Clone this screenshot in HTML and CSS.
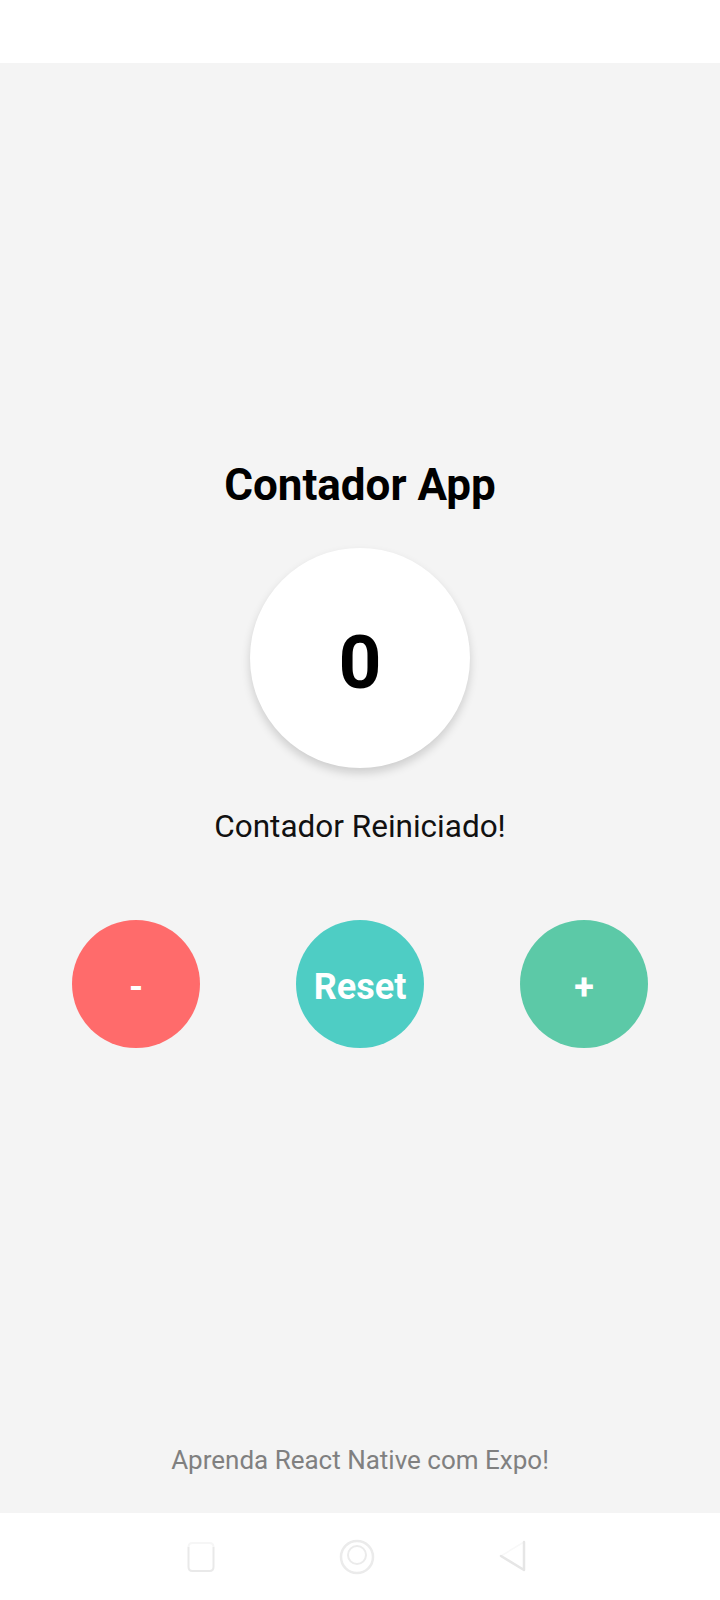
FILE: index.html
```html
<!DOCTYPE html>
<html lang="pt">
<head>
<meta charset="utf-8">
<title>Contador App</title>
<link rel="stylesheet" href="styles.css">
</head>
<body>
<div class="phone">
  <div class="status"></div>
  <main class="screen">
    <section class="content">
      <h1 class="title">Contador App</h1>
      <div class="counter"><span class="count">0</span></div>
      <p class="message">Contador Reiniciado!</p>
      <div class="buttons">
        <button class="btn btn-minus">-</button>
        <button class="btn btn-reset">Reset</button>
        <button class="btn btn-plus">+</button>
      </div>
    </section>
    <footer class="footer">Aprenda React Native com Expo!</footer>
  </main>
  <nav class="navbar">
    <svg class="nav-icon" width="28" height="32" viewBox="0 0 28 32"><path d="M1.5 6 Q1.5 2 5.5 2 H22.5 Q26.5 2 26.5 6" fill="none" stroke="#f6f6f6" stroke-width="2"/><path d="M1.5 6 V26 Q1.5 30 5.5 30 H22.5 Q26.5 30 26.5 26 V6" fill="none" stroke="#e9e9e9" stroke-width="2"/></svg>
    <svg class="nav-icon" width="36" height="36" viewBox="0 0 36 36"><circle cx="18" cy="18" r="16" fill="none" stroke="#ebebeb" stroke-width="2.5"/><circle cx="18" cy="16" r="9" fill="none" stroke="#ebebeb" stroke-width="2"/></svg>
    <svg class="nav-icon" width="28" height="34" viewBox="0 0 28 34"><path d="M25 2 L2 16" fill="none" stroke="#f8f8f8" stroke-width="1.5" stroke-linecap="round"/><path d="M25 2 V30 L2 16" fill="none" stroke="#e6e6e6" stroke-width="2.5" stroke-linejoin="round" stroke-linecap="round"/></svg>
  </nav>
</div>
</body>
</html>
```

FILE: styles.css
```css
* { box-sizing: border-box; }
html, body {
  margin: 0;
  padding: 0;
  background: #ffffff;
  font-family: Roboto, "Noto Sans", "Liberation Sans", sans-serif;
}
.phone {
  width: 720px;
  height: 1600px;
  display: flex;
  flex-direction: column;
}
.status {
  height: 63px;
  background: #ffffff;
  flex: none;
}
.screen {
  flex: 1;
  background: #f4f4f4;
  display: flex;
  flex-direction: column;
}
.content {
  flex: 1;
  display: flex;
  flex-direction: column;
  align-items: center;
  justify-content: center;
}
.title {
  margin: 0;
  font-size: 44px;
  line-height: 52px;
  font-weight: 700;
  color: #000;
}
.counter {
  margin-top: 37px;
  width: 220px;
  height: 220px;
  border-radius: 50%;
  background: #ffffff;
  display: flex;
  align-items: center;
  justify-content: center;
  padding-top: 8px;
  box-shadow: 0 5px 10px rgba(0, 0, 0, 0.16);
}
.count {
  font-size: 75px;
  line-height: 1;
  font-weight: 700;
  color: #000;
}
.message {
  margin: 40px 0 0;
  font-size: 31.5px;
  line-height: 38px;
  color: #111;
}
.buttons {
  margin-top: 74px;
  width: 100%;
  padding: 0 24px;
  display: flex;
  justify-content: space-around;
}
.btn {
  width: 128px;
  height: 128px;
  border: none;
  border-radius: 50%;
  padding: 5px 0 0;
  font-family: Roboto, "Noto Sans", "Liberation Sans", sans-serif;
  font-size: 36px;
  font-weight: 700;
  color: #ffffff;
  display: flex;
  align-items: center;
  justify-content: center;
}
.btn-minus { background: #ff6b6b; }
.btn-reset { background: #4ecdc4; }
.btn-plus { background: #5cc9a7; }
.footer {
  flex: none;
  text-align: center;
  font-size: 26px;
  line-height: 33px;
  padding-bottom: 36px;
  color: #808080;
}
.navbar {
  height: 87px;
  flex: none;
  background: #ffffff;
  display: flex;
  align-items: center;
  justify-content: flex-start;
  padding-left: 187px;
  gap: 124px;
}
```
